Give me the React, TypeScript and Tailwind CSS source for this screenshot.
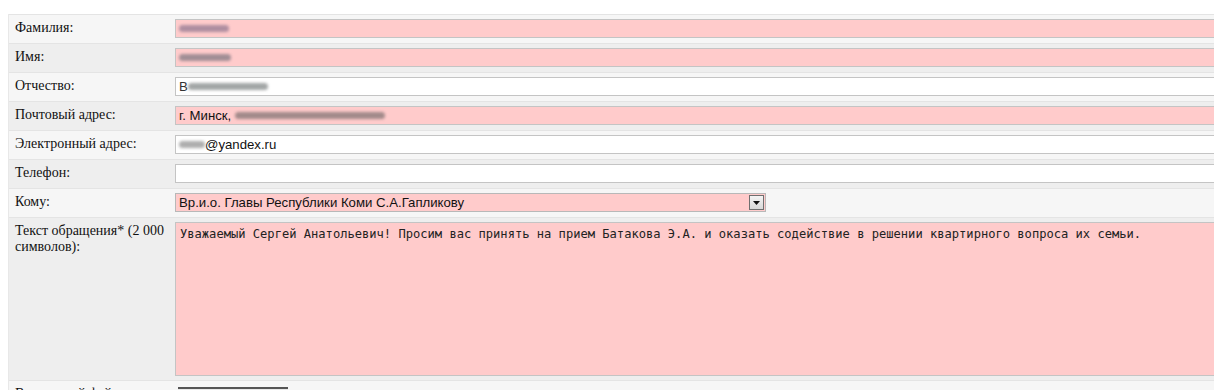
import React from "react";

const serif = { fontFamily: '"Liberation Serif", "Times New Roman", serif' };

function Blur({ w, className = "" }: { w: number; className?: string }) {
  return (
    <span
      className={`inline-block h-[7px] rounded-full bg-[#8a7f88] blur-[1.5px] align-middle opacity-80 ${className}`}
      style={{ width: w }}
    />
  );
}

function Row({
  label,
  dark,
  children,
  h = "h-[29px]",
}: {
  label: React.ReactNode;
  dark: boolean;
  children: React.ReactNode;
  h?: string;
}) {
  return (
    <div
      className={`flex ${h} border-t border-[#e4e4e4] ${dark ? "bg-[#eeeeee]" : "bg-[#f6f6f6]"}`}
    >
      <div
        className="w-[166px] shrink-0 pl-[6px] pr-1 pt-[5px] text-[14px] leading-[16px] text-[#111]"
        style={serif}
      >
        {label}
      </div>
      <div className="flex-1 pt-[4px]">{children}</div>
    </div>
  );
}

function Input({
  pink,
  children,
}: {
  pink?: boolean;
  children?: React.ReactNode;
}) {
  return (
    <div
      className={`flex h-[19px] w-[1100px] items-center border border-[#c4c4c4] px-[3px] text-[13.2px] text-[#111] ${
        pink ? "bg-[#ffcbcb]" : "bg-white"
      }`}
      style={{ fontFamily: '"Liberation Sans", Arial, sans-serif' }}
    >
      {children}
    </div>
  );
}

export default function App() {
  return (
    <div className="h-[390px] w-[1214px] overflow-hidden bg-white pl-[8px] pt-[14px]">
      <div className="w-[1300px] border-l border-[#e8e8e8]">
        <Row label="Фамилия:" dark={false}>
          <Input pink>
            <Blur w={50} className="bg-[#9b7f96]" />
          </Input>
        </Row>
        <Row label="Имя:" dark>
          <Input pink>
            <Blur w={52} className="h-[5px] bg-[#6e5a5a]" />
          </Input>
        </Row>
        <Row label="Отчество:" dark={false}>
          <Input>
            <span className="text-[#333]">В</span>
            <Blur w={80} className="bg-[#8c9090]" />
          </Input>
        </Row>
        <Row label="Почтовый адрес:" dark>
          <Input pink>
            <span>г. Минск,&nbsp;</span>
            <Blur w={150} className="h-[5px] bg-[#8c7a7a]" />
          </Input>
        </Row>
        <Row label="Электронный адрес:" dark={false}>
          <Input>
            <Blur w={26} className="bg-[#9a9a9a]" />
            <span>@yandex.ru</span>
          </Input>
        </Row>
        <Row label="Телефон:" dark>
          <Input />
        </Row>
        <Row label="Кому:" dark={false}>
          <div
            className="flex h-[19px] w-[591px] items-center border border-[#b8b8b8] bg-[#ffcbcb] pl-[3px] text-[13.2px] text-[#111]"
            style={{ fontFamily: '"Liberation Sans", Arial, sans-serif' }}
          >
            <span className="flex-1">Вр.и.о. Главы Республики Коми С.А.Гапликову</span>
            <span className="mr-[1px] flex h-[15px] w-[15px] items-center justify-center border border-[#6f6f6f] bg-gradient-to-b from-[#f4f4f4] to-[#d8d8d8]">
              <svg width="7" height="4" viewBox="0 0 7 4">
                <path d="M0 0h7L3.5 4z" fill="#111" />
              </svg>
            </span>
          </div>
        </Row>
        <Row label="Текст обращения* (2 000 символов):" dark h="h-[163px]">
          <div
            className="h-[154px] w-[1100px] border border-[#c4c4c4] bg-[#ffcbcb] px-[4px] pt-[4px] text-[12.1px] leading-[15px] text-[#222]"
            style={{ fontFamily: '"DejaVu Sans Mono", "Liberation Mono", monospace' }}
          >
            Уважаемый Сергей Анатольевич! Просим вас принять на прием Батакова Э.А. и оказать содействие в решении квартирного вопроса их семьи.
          </div>
        </Row>
        <Row label="Вложенный файл:" dark={false}>
          <div className="ml-[3px] mt-[2px] h-[19px] w-[110px] border-t-2 border-[#555] bg-[#e8e8e8]" />
        </Row>
      </div>
    </div>
  );
}
